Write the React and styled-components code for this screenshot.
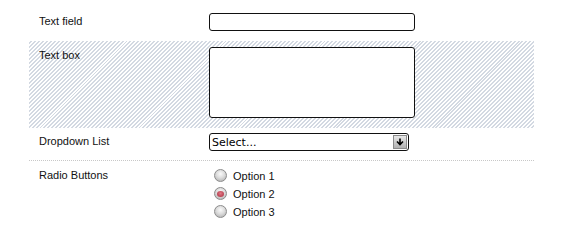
import React, { useState } from "react";
import styled, { createGlobalStyle } from "styled-components";

const GlobalStyle = createGlobalStyle`
  html, body {
    margin: 0;
    padding: 0;
    background: #fff;
  }
  body {
    font-family: "Liberation Sans", Arial, sans-serif;
    font-size: 11px;
    color: #111;
  }
`;

const Form = styled.form`
  padding-left: 29px;
  width: 505px;
`;

const Row = styled.div`
  display: grid;
  grid-template-columns: 180px 1fr;
  padding: ${(p) => p.pad};
  background: ${(p) =>
    p.striped
      ? "repeating-linear-gradient(135deg, #ffffff 0px, #ffffff 1.4px, #d3d9e2 1.4px, #d3d9e2 2.8px)"
      : "#fff"};
  border-bottom: ${(p) => (p.dotted ? "1px dotted #c8c8c8" : "none")};
`;

const Label = styled.label`
  padding-left: 10px;
  padding-top: ${(p) => p.top || "2px"};
  line-height: 13px;
  font-size: 11px;
  color: #111;
`;

const TextInput = styled.input`
  box-sizing: border-box;
  width: 206px;
  height: 18px;
  border: 1px solid #111;
  border-radius: 3px;
  background: #fff;
  margin: 0;
  padding: 0 3px;
  outline: none;
`;

const TextArea = styled.textarea`
  box-sizing: border-box;
  width: 206px;
  height: 71px;
  border: 1px solid #111;
  border-radius: 3px;
  background: #fff;
  margin: 0;
  padding: 2px;
  resize: none;
  outline: none;
  display: block;
`;

const Select = styled.div`
  box-sizing: border-box;
  width: 200px;
  height: 18px;
  border: 1px solid #111;
  border-radius: 3px;
  background: #fff;
  display: flex;
  align-items: center;
  justify-content: space-between;
  padding: 0 1px 0 2px;
  font-family: "DejaVu Sans", Verdana, sans-serif;
  font-size: 11px;
  color: #000;
`;

const ArrowButton = styled.span`
  box-sizing: border-box;
  width: 14px;
  height: 14px;
  border: 1px solid #8a8a8a;
  background: linear-gradient(#e8e8e8, #b0b0b0);
  display: flex;
  align-items: center;
  justify-content: center;
`;

const RadioList = styled.div`
  display: flex;
  flex-direction: column;
  gap: 5px;
  padding-left: 5px;
`;

const RadioItem = styled.label`
  display: flex;
  align-items: center;
  gap: 6px;
  height: 13px;
  font-size: 11px;
  color: #111;
  cursor: pointer;
`;

const RadioDot = styled.span`
  box-sizing: border-box;
  width: 13px;
  height: 13px;
  border-radius: 50%;
  border: 1px solid #8c8c8c;
  background: radial-gradient(circle at 50% 35%, #fafafa 0%, #dcdcdc 45%, #a9a9a9 100%);
  display: flex;
  align-items: center;
  justify-content: center;

  &::after {
    content: "";
    width: 7px;
    height: 6px;
    border-radius: 50%;
    background: ${(p) =>
      p.checked ? "radial-gradient(circle at 50% 40%, #e07a86, #a8283a)" : "transparent"};
  }
`;

const options = ["Option 1", "Option 2", "Option 3"];

const App = () => {
  const [choice, setChoice] = useState("Option 2");

  return (
    <>
      <GlobalStyle />
      <Form>
        <Row pad="13px 0 10px">
          <Label>Text field</Label>
          <div>
            <TextInput type="text" />
          </div>
        </Row>
        <Row striped pad="6px 0 10px">
          <Label>Text box</Label>
          <div>
            <TextArea />
          </div>
        </Row>
        <Row dotted pad="5px 0 9px">
          <Label>Dropdown List</Label>
          <Select>
            <span>Select...</span>
            <ArrowButton>
              <svg width="10" height="10" viewBox="0 0 10 10">
                <path d="M5 1.5 V7.5 M2 4.5 L5 7.5 L8 4.5" stroke="#000" strokeWidth="1.6" fill="none" />
              </svg>
            </ArrowButton>
          </Select>
        </Row>
        <Row pad="8px 0 10px">
          <Label top="0">Radio Buttons</Label>
          <RadioList>
            {options.map((o) => (
              <RadioItem key={o} onClick={() => setChoice(o)}>
                <RadioDot checked={choice === o} />
                {o}
              </RadioItem>
            ))}
          </RadioList>
        </Row>
      </Form>
    </>
  );
};

export default App;
